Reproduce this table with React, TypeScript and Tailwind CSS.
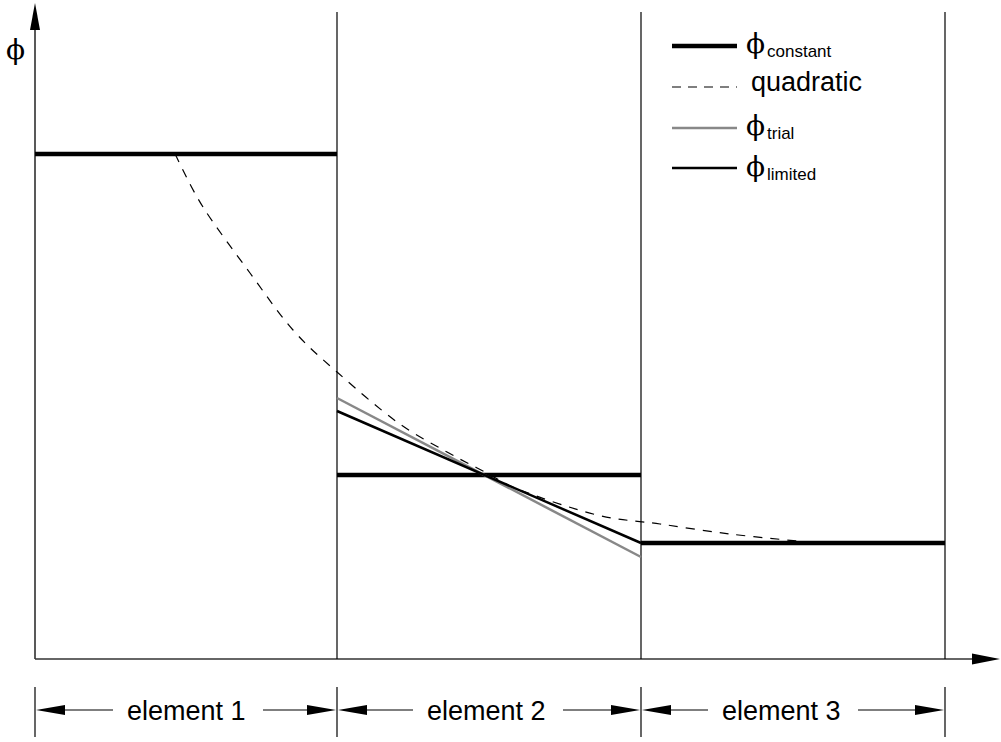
const curvePts: [number, number][] = [
  [175, 154],
  [203, 207],
  [250, 273],
  [293, 330],
  [337, 372],
  [397, 422],
  [447, 452],
  [485, 472],
  [520, 490],
  [597, 515],
  [660, 524],
  [730, 534],
  [797, 541],
];

// Catmull-Rom through the sampled points, as cubic beziers
function smoothPath(pts: [number, number][]) {
  let d = `M${pts[0][0]},${pts[0][1]}`;
  for (let i = 0; i < pts.length - 1; i++) {
    const p0 = pts[i - 1] ?? pts[i];
    const p1 = pts[i];
    const p2 = pts[i + 1];
    const p3 = pts[i + 2] ?? p2;
    const c1x = p1[0] + (p2[0] - p0[0]) / 6;
    const c1y = p1[1] + (p2[1] - p0[1]) / 6;
    const c2x = p2[0] - (p3[0] - p1[0]) / 6;
    const c2y = p2[1] - (p3[1] - p1[1]) / 6;
    d += ` C${c1x},${c1y} ${c2x},${c2y} ${p2[0]},${p2[1]}`;
  }
  return d;
}

const phiClass = "font-['DejaVu_Serif','Liberation_Serif',serif]";

const elements = [
  { label: "element 1", x0: 35, x1: 337, l1: 113, tx: 127, r0: 263 },
  { label: "element 2", x0: 337, x1: 641, l1: 413, tx: 427, r0: 563 },
  { label: "element 3", x0: 641, x1: 945, l1: 708, tx: 722, r0: 858 },
];

const legend = [
  { y: 46, kind: "constant", sub: "constant", base: 53 },
  { y: 87, kind: "quadratic", sub: "", base: 91 },
  { y: 128, kind: "trial", sub: "trial", base: 135 },
  { y: 168, kind: "limited", sub: "limited", base: 176 },
];

function LegendLine({ kind, y }: { kind: string; y: number }) {
  if (kind === "constant")
    return <line x1={672} y1={y} x2={737} y2={y} stroke="#000" strokeWidth={4.5} />;
  if (kind === "quadratic")
    return (
      <line x1={672} y1={y} x2={737} y2={y} stroke="#000" strokeWidth={1.2} strokeDasharray="9 7" />
    );
  if (kind === "trial")
    return <line x1={672} y1={y} x2={737} y2={y} stroke="#888" strokeWidth={2.5} />;
  return <line x1={672} y1={y} x2={737} y2={y} stroke="#000" strokeWidth={2.5} />;
}

export default function App() {
  return (
    <div className="w-[1001px] h-[742px] bg-white overflow-hidden font-['Liberation_Sans',Arial,sans-serif]">
      <svg width={1001} height={742} viewBox="0 0 1001 742" className="block">
        {/* axes */}
        <line x1={35} y1={28} x2={35} y2={659} stroke="#222" strokeWidth={1.5} />
        <polygon points="35,3 30,30 40,30" fill="#000" />
        <line x1={35} y1={659} x2={974} y2={659} stroke="#333" strokeWidth={1.5} />
        <polygon points="1000,659 972,653.5 972,664.5" fill="#000" />
        <text x={6} y={59} fontSize={28} className={phiClass} fill="#000">
          ϕ
        </text>

        {/* element boundaries */}
        {[337, 641, 945].map((x) => (
          <line key={x} x1={x} y1={12} x2={x} y2={659} stroke="#000" strokeWidth={1.2} />
        ))}

        {/* constant values */}
        <line x1={35} y1={154} x2={337} y2={154} stroke="#000" strokeWidth={4.5} />
        <line x1={337} y1={475} x2={641} y2={475} stroke="#000" strokeWidth={4.5} />
        <line x1={641} y1={543} x2={945} y2={543} stroke="#000" strokeWidth={4.5} />

        {/* quadratic reconstruction */}
        <path
          d={smoothPath(curvePts)}
          fill="none"
          stroke="#000"
          strokeWidth={1.2}
          strokeDasharray="9 8"
        />

        {/* trial and limited slopes */}
        <line x1={337} y1={398} x2={641} y2={557} stroke="#888" strokeWidth={2.5} />
        <line x1={337} y1={411} x2={641} y2={543} stroke="#000" strokeWidth={2.5} />

        {/* legend */}
        {legend.map((l) => (
          <g key={l.kind}>
            <LegendLine kind={l.kind} y={l.y} />
            {l.kind === "quadratic" ? (
              <text x={751} y={l.base} fontSize={27} fill="#000">
                quadratic
              </text>
            ) : (
              <>
                <text x={746} y={l.base} fontSize={28} className={phiClass} fill="#000">
                  ϕ
                </text>
                <text x={767} y={l.base + 4} fontSize={17} fill="#000">
                  {l.sub}
                </text>
              </>
            )}
          </g>
        ))}

        {/* element dimension markers */}
        {[35, 337, 641, 945].map((x) => (
          <line key={x} x1={x} y1={687} x2={x} y2={737} stroke="#000" strokeWidth={1.2} />
        ))}
        {elements.map((e) => (
          <g key={e.label}>
            <line x1={e.x0 + 20} y1={710} x2={e.l1} y2={710} stroke="#000" strokeWidth={1.2} />
            <polygon points={`${e.x0 + 1},710 ${e.x0 + 30},705 ${e.x0 + 30},715`} fill="#000" />
            <text x={e.tx} y={720} fontSize={27} fill="#000">
              {e.label}
            </text>
            <line x1={e.r0} y1={710} x2={e.x1 - 20} y2={710} stroke="#000" strokeWidth={1.2} />
            <polygon points={`${e.x1 - 1},710 ${e.x1 - 30},705 ${e.x1 - 30},715`} fill="#000" />
          </g>
        ))}
      </svg>
    </div>
  );
}
